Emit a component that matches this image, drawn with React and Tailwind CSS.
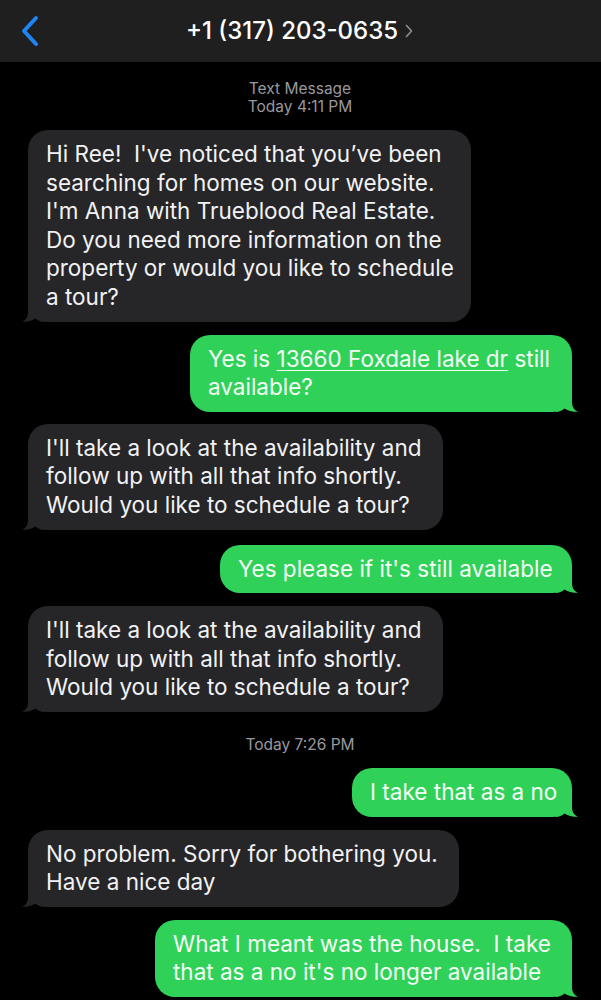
import React from 'react'

const font = { fontFamily: 'Inter, "Liberation Sans", sans-serif' }

const Tail = ({ mine }) => (
    <svg
        width="22"
        height="22"
        viewBox="0 0 22 22"
        className={mine ? 'absolute right-[-6px] bottom-0 -scale-x-100' : 'absolute left-[-6px] bottom-0'}
    >
        <path
            d="M6 0 L6 12 C6 17 4 20 0 21.6 C5 22.4 10 21 13.5 18.6 C16 21 19 22 22 22 L22 0 Z"
            fill={mine ? '#30d158' : '#262629'}
        />
    </svg>
)

const Bubble = ({ mine, width, top, children }) => (
    <div className={`flex ${mine ? 'justify-end' : 'justify-start'}`} style={{ marginTop: top }}>
        <div
            className={`relative rounded-[20px] px-[18px] py-[10px] text-[22.5px] leading-[28.6px] whitespace-nowrap ${mine ? 'bg-[#30d158] text-[#f4fff6]' : 'bg-[#262629] text-[#f2f2f4]'}`}
            style={{ width }}
        >
            <span className="relative z-10">{children}</span>
            <Tail mine={mine} />
        </div>
    </div>
)

const Stamp = ({ children, top }) => (
    <div className="text-center text-[15.5px] leading-[18px] text-[#98989d]" style={{ marginTop: top }}>
        {children}
    </div>
)

const App = () => {
    return (
        <div className="w-[601px] h-[1000px] overflow-hidden bg-black" style={font}>
            {/* Header */}
            <div className="relative h-[62px] bg-[#1f1f1f] flex items-center justify-center">
                <svg width="20" height="32" viewBox="0 0 20 32" className="absolute left-[20px] top-[15px]">
                    <path d="M16 3 L4 16 L16 29" fill="none" stroke="#1f84f6" strokeWidth="4" strokeLinecap="round" strokeLinejoin="round" />
                </svg>
                <div className="flex items-center gap-[7px] pr-[2px]">
                    <p className="text-[24px] font-medium text-white">+1 (317) 203-0635</p>
                    <svg width="8" height="14" viewBox="0 0 8 14">
                        <path d="M1.5 1.5 L6.5 7 L1.5 12.5" fill="none" stroke="#8e8e93" strokeWidth="1.6" strokeLinecap="round" strokeLinejoin="round" />
                    </svg>
                </div>
            </div>

            {/* Messages */}
            <div className="flex flex-col pl-[28px] pr-[29px]">
                <Stamp top={18}>Text Message<br />Today 4:11 PM</Stamp>

                <Bubble width={443} top={14}>
                    Hi Ree!&nbsp; I've noticed that you’ve been<br />
                    searching for homes on our website.<br />
                    I'm Anna with Trueblood Real Estate.<br />
                    Do you need more information on the<br />
                    property or would you like to schedule<br />
                    a tour?
                </Bubble>

                <Bubble mine width={382} top={13}>
                    Yes is <span className="underline underline-offset-[3px] decoration-1">13660 Foxdale lake dr</span> still<br />
                    available?
                </Bubble>

                <Bubble width={415} top={12}>
                    I'll take a look at the availability and<br />
                    follow up with all that info shortly.<br />
                    Would you like to schedule a tour?
                </Bubble>

                <Bubble mine width={352} top={15}>
                    Yes please if it's still available
                </Bubble>

                <Bubble width={415} top={13}>
                    I'll take a look at the availability and<br />
                    follow up with all that info shortly.<br />
                    Would you like to schedule a tour?
                </Bubble>

                <Stamp top={24}>Today 7:26 PM</Stamp>

                <Bubble mine width={220} top={14}>
                    I take that as a no
                </Bubble>

                <Bubble width={431} top={13}>
                    No problem. Sorry for bothering you.<br />
                    Have a nice day
                </Bubble>

                <Bubble mine width={417} top={13}>
                    What I meant was the house.&nbsp; I take<br />
                    that as a no it's no longer available
                </Bubble>
            </div>
        </div>
    )
}

export default App
